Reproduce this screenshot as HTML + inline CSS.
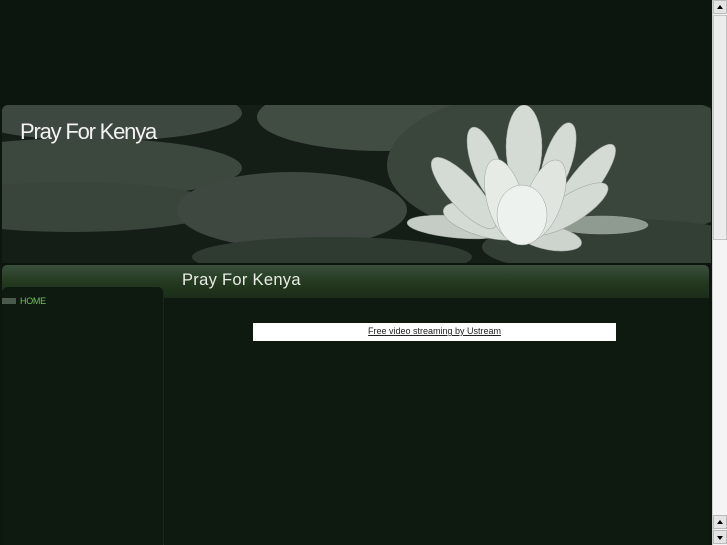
<!DOCTYPE html>
<html><head><meta charset="utf-8"><style>
html,body{margin:0;padding:0;width:727px;height:545px;overflow:hidden;background:#0c150e;font-family:"Liberation Sans",sans-serif}
#page{position:absolute;left:0;top:0;width:712px;height:545px;background:#0c150e}
#banner{position:absolute;left:2px;top:105px;width:709px;height:158px;border-radius:6px 6px 0 0;overflow:hidden;background:#1a231c}
#btitle{position:absolute;left:20px;top:119px;font-size:22px;color:#f2f2f2;letter-spacing:-1.2px}
#bar{position:absolute;left:2px;top:265px;width:707px;height:33px;background:linear-gradient(#394f3b,#24381f 55%,#1b2d1a);border-radius:5px 5px 0 0}
#ptitle{position:absolute;left:182px;top:271px;font-size:16.5px;color:#e8ece6;letter-spacing:0.3px}
#nav{position:absolute;left:2px;top:287px;width:161px;height:258px;background:#0e1a10;border-radius:6px 6px 0 0;border-right:1px dotted #2a3a2c}
#navmark{position:absolute;left:2px;top:298px;width:14px;height:6px;background:#4a5a4c}
#home{position:absolute;left:20px;top:296px;font-size:9px;color:#6fc25d;letter-spacing:-0.3px}
#main{position:absolute;left:165px;top:298px;width:544px;height:247px;background:#0e1a10}
#ust{position:absolute;left:253px;top:323px;width:363px;height:18px;background:#fff;text-align:center;font-size:9px;line-height:17px}
#ust span{color:#222;text-decoration:underline}
#sb{position:absolute;left:712px;top:0;width:15px;height:545px;background:#f4f4f4;border-left:1px solid #d0d0d0;box-sizing:border-box}
.btn{position:absolute;left:0;width:14px;height:14px;background:#e4e4e4;border:1px solid #bbb;box-sizing:border-box}
.up:after{content:"";position:absolute;left:3px;top:4px;border-left:3px solid transparent;border-right:3px solid transparent;border-bottom:4px solid #000}
.dn:after{content:"";position:absolute;left:3px;top:5px;border-left:3px solid transparent;border-right:3px solid transparent;border-top:4px solid #000}
#thumb{position:absolute;left:0;top:15px;width:14px;height:225px;background:#ececec;border:1px solid #c4c4c4;box-sizing:border-box}
</style></head><body>
<div id="page">
<div id="banner">
<svg width="709" height="158" viewBox="0 0 709 158">
<rect width="709" height="158" fill="#141d16"/>
<ellipse cx="100" cy="8" rx="140" ry="28" fill="#3d4840"/>
<ellipse cx="380" cy="12" rx="125" ry="34" fill="#414c43"/>
<ellipse cx="80" cy="63" rx="160" ry="30" fill="#3c473e"/>
<ellipse cx="70" cy="102" rx="150" ry="25" fill="#39443b"/>
<ellipse cx="290" cy="105" rx="115" ry="38" fill="#3e4840"/>
<ellipse cx="330" cy="152" rx="140" ry="20" fill="#2f3a31"/>
<ellipse cx="575" cy="60" rx="190" ry="80" fill="#3a453c"/>
<ellipse cx="620" cy="142" rx="140" ry="28" fill="#333e35"/>
<g fill="#d4dad4" stroke="#9aa39b" stroke-width="0.5">
<ellipse cx="455" cy="122" rx="50" ry="11" transform="rotate(5 455 122)" fill="#c5ccc5"/>
<ellipse cx="600" cy="120" rx="46" ry="9" fill="#8f9a90"/>
<ellipse cx="548" cy="133" rx="32" ry="12" transform="rotate(10 548 133)" fill="#cdd3cd"/>
<ellipse cx="484" cy="116" rx="44" ry="16" transform="rotate(15 484 116)"/>
<ellipse cx="462" cy="88" rx="15" ry="46" transform="rotate(-42 462 88)"/>
<ellipse cx="582" cy="78" rx="14" ry="48" transform="rotate(38 582 78)"/>
<ellipse cx="568" cy="104" rx="14" ry="44" transform="rotate(58 568 104)"/>
<ellipse cx="484" cy="60" rx="14" ry="40" transform="rotate(-20 484 60)"/>
<ellipse cx="556" cy="56" rx="14" ry="40" transform="rotate(18 556 56)"/>
<ellipse cx="522" cy="42" rx="18" ry="42"/>
<ellipse cx="503" cy="95" rx="18" ry="42" transform="rotate(-15 503 95)" fill="#e6ebe6"/>
<ellipse cx="542" cy="95" rx="18" ry="42" transform="rotate(20 542 95)" fill="#e0e5e0"/>
<ellipse cx="520" cy="110" rx="25" ry="30" fill="#eef2ee"/>
</g>
</svg>
</div>
<div id="btitle">Pray For Kenya</div>
<div id="bar"></div>
<div id="ptitle">Pray For Kenya</div>
<div id="nav"></div>
<div id="navmark"></div>
<div id="home">HOME</div>
<div id="main"></div>
<div id="ust"><span>Free video streaming by Ustream</span></div>
</div>
<div id="sb">
<div class="btn up" style="top:0"></div>
<div id="thumb"></div>
<div class="btn up" style="top:515px"></div>
<div class="btn dn" style="top:530px"></div>
</div>
</body></html>
